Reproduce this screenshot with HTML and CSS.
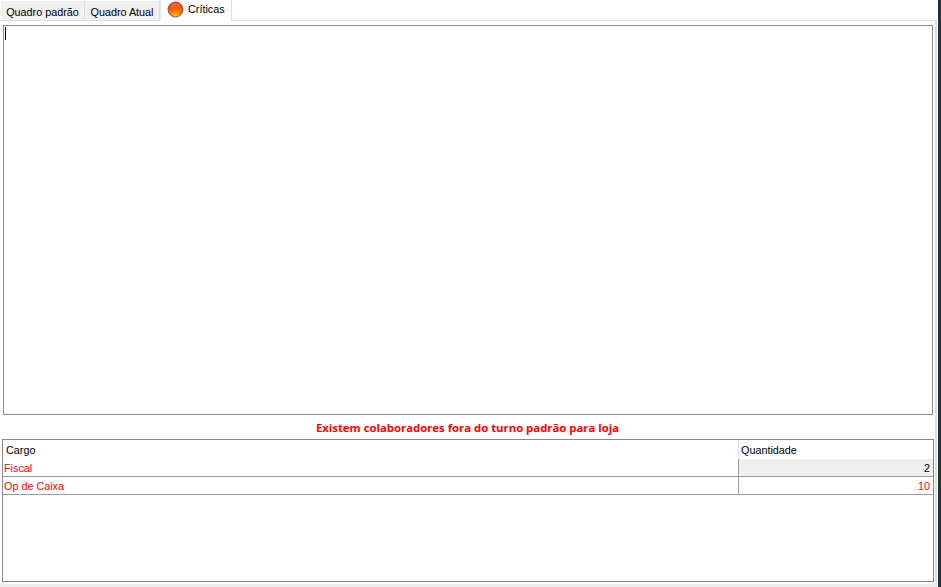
FILE: index.html
```html
<!DOCTYPE html>
<html lang="pt">
<head>
<meta charset="utf-8">
<title>Críticas</title>
<link rel="stylesheet" href="styles.css">
</head>
<body>
<div class="window">
  <div class="main">
    <div class="tabs">
      <div class="tab tab-first">Quadro padrão</div>
      <div class="tab tab-second">Quadro Atual</div>
      <div class="tab tab-active">
        <svg class="dot" width="17" height="17" viewBox="0 0 17 17">
          <defs>
            <radialGradient id="ball" cx="50%" cy="90%" r="80%">
              <stop offset="0" stop-color="#ffc014"/>
              <stop offset="0.5" stop-color="#ff6a08"/>
              <stop offset="1" stop-color="#f83c06"/>
            </radialGradient>
          </defs>
          <circle cx="8.5" cy="8.5" r="7.5" fill="url(#ball)" stroke="#7a5a48" stroke-width="1"/>
          <ellipse cx="8.5" cy="4.2" rx="4.4" ry="2.1" fill="#ff6a48" opacity="0.75"/>
        </svg>
        <span>Críticas</span>
      </div>
    </div>
    <div class="panel">
      <div class="memo"><div class="caret"></div></div>
      <div class="warning">Existem colaboradores fora do turno padrão para loja</div>
      <div class="grid">
        <div class="row row-head">
          <div class="cell c-cargo">Cargo</div>
          <div class="cell c-qtd">Quantidade</div>
        </div>
        <div class="row row-data row-shaded">
          <div class="cell c-cargo red">Fiscal</div>
          <div class="cell c-qtd num">2</div>
        </div>
        <div class="row row-data">
          <div class="cell c-cargo red">Op de Caixa</div>
          <div class="cell c-qtd num red">10</div>
        </div>
      </div>
    </div>
  </div>
  <div class="edge"></div>
</div>
</body>
</html>
```

FILE: styles.css
```css
* { box-sizing: border-box; }
html, body { margin: 0; height: 100%; overflow: hidden; background: #fff; }
body { font-family: "Liberation Sans", Arial, sans-serif; font-size: 10.8px; color: #000; }

.window { display: flex; width: 941px; height: 587px; }
.main { width: 938px; height: 587px; display: flex; flex-direction: column; }
.edge { width: 3px; background: #2b3036; }

.tabs { display: flex; height: 20px; align-items: flex-start; padding-left: 1px; }
.tab { height: 20px; margin-top: 1px; padding-top: 3px; background: #f0f0f0; border-right: 1px solid #dcdcdc; text-align: center; line-height: 16px; white-space: nowrap; }
.tab-first { width: 84px; }
.tab-second { width: 75px; }
.tab-active { width: 72px; height: 21px; margin-top: 0; padding: 0 0 0 6px; background: #fff; border-left: 1px solid #e6e6e6; border-right: 1px solid #dcdcdc; display: flex; align-items: center; gap: 4px; position: relative; z-index: 1; }
.dot { flex: none; margin-top: -3px; }
.tab-active span { margin-top: -3px; }

.panel { flex: 1; width: 937px; border-top: 1px solid #dcdcdc; border-right: 2px solid #e0e0e0; border-bottom: 3px solid #ececec; display: flex; flex-direction: column; padding: 4px 2px 2px 2px; }
.memo { height: 390px; margin: 0 0 0 1px; width: 930px; border: 1px solid #8a8d90; padding: 1px 1px; }
.caret { width: 1px; height: 13px; background: #000; }
.warning { height: 24px; padding-top: 1px; line-height: 24px; text-align: center; color: #f00; font-family: "Open Sans", sans-serif; font-weight: 700; font-size: 11.35px; }
.grid { flex: 1; width: 932px; border: 1px solid #85888c; }

.row { display: flex; height: 18px; }
.row-head { height: 19px; }
.row-data { border-bottom: 1px solid #9a9a9a; }
.cell { line-height: 19px; white-space: nowrap; }
.row-head .cell { line-height: 21px; }
.c-cargo { width: 735px; padding-left: 1px; }
.row-head .c-cargo { padding-left: 3px; }
.c-qtd { flex: 1; border-left: 1px solid #a0a0a0; padding-left: 2px; }
.row-head .c-qtd { border-left-color: #e4e4e4; }
.num { text-align: right; padding-right: 3px; }
.row-shaded .c-qtd { background: #efefef; }
.red { color: #f00; }
```
